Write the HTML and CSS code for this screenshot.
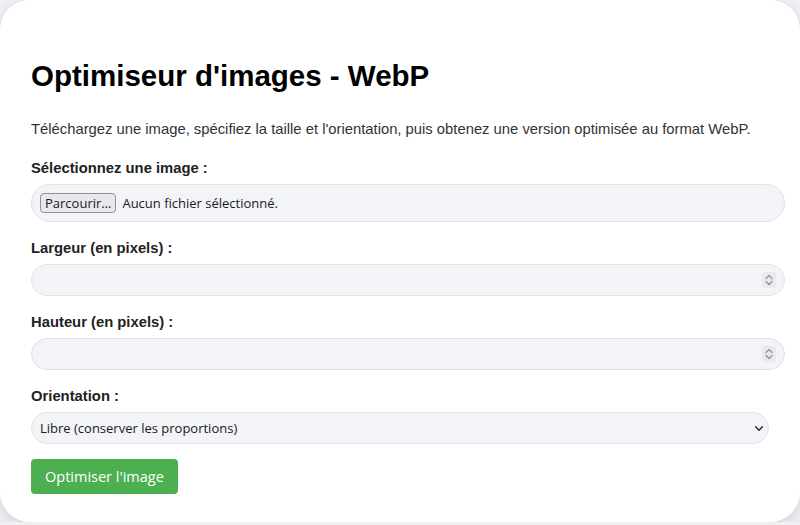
FILE: index.html
```html
<!DOCTYPE html>
<html lang="fr">
<head>
  <meta charset="UTF-8">
  <meta name="viewport" content="width=device-width, initial-scale=1.0">
  <title>Optimiseur d'images - WebP</title>
  <link rel="stylesheet" href="styles.css">
</head>
<body>
  <div class="container">
    <h1>Optimiseur d'images - WebP</h1>
    <p class="intro">Téléchargez une image, spécifiez la taille et l'orientation, puis obtenez une version optimisée au format WebP.</p>

    <form id="imageForm" class="form">
      <div class="form-group">
        <label for="imageInput">Sélectionnez une image :</label>
        <div class="file-field">
          <input type="file" id="imageInput" class="file-input" accept="image/*">
          <label for="imageInput" class="file-button">Parcourir…</label>
          <span class="file-name">Aucun fichier sélectionné.</span>
        </div>
      </div>

      <div class="form-group">
        <label for="widthInput">Largeur (en pixels) :</label>
        <div class="number-field">
          <input type="number" id="widthInput" class="input" min="1">
          <svg class="spin" viewBox="0 0 14 16" aria-hidden="true">
            <path d="M4 6.5 7 3.5 10 6.5M4 9.5 7 12.5 10 9.5" fill="none" stroke="#8a8f98" stroke-width="1.2" stroke-linecap="round" stroke-linejoin="round"/>
          </svg>
        </div>
      </div>

      <div class="form-group">
        <label for="heightInput">Hauteur (en pixels) :</label>
        <div class="number-field">
          <input type="number" id="heightInput" class="input" min="1">
          <svg class="spin" viewBox="0 0 14 16" aria-hidden="true">
            <path d="M4 6.5 7 3.5 10 6.5M4 9.5 7 12.5 10 9.5" fill="none" stroke="#8a8f98" stroke-width="1.2" stroke-linecap="round" stroke-linejoin="round"/>
          </svg>
        </div>
      </div>

      <div class="form-group form-group-last">
        <label for="orientation">Orientation :</label>
        <div class="select-field">
          <select id="orientation" class="select">
            <option value="free">Libre (conserver les proportions)</option>
            <option value="landscape">Paysage</option>
            <option value="portrait">Portrait</option>
            <option value="square">Carré</option>
          </select>
          <svg class="chevron" viewBox="0 0 12 8" aria-hidden="true">
            <path d="M2 2 6 6 10 2" fill="none" stroke="#2b2b2b" stroke-width="1.8" stroke-linecap="round" stroke-linejoin="round"/>
          </svg>
        </div>
      </div>

      <button type="submit" class="btn">Optimiser l'image</button>
    </form>
  </div>

  <script>
    const imageInput = document.getElementById('imageInput');
    const fileName = document.querySelector('.file-name');

    // Show the chosen file name next to the button
    imageInput.addEventListener('change', () => {
      fileName.textContent = imageInput.files.length
        ? imageInput.files[0].name
        : 'Aucun fichier sélectionné.';
    });

    document.getElementById('imageForm').addEventListener('submit', (e) => {
      e.preventDefault();
    });
  </script>
</body>
</html>
```

FILE: styles.css
```css
:root {
  --bg-color: #eef0f3;
  --card-bg: #ffffff;
  --field-bg: #f2f4f7;
  --field-border: #dfe2e7;
  --text-color: #333333;
  --label-color: #222222;
  --green: #4caf50;
  --ui-font: "Open Sans", "Noto Sans", sans-serif;
}

* {
  box-sizing: border-box;
}

body {
  margin: 0;
  background-color: var(--bg-color);
  font-family: "Liberation Sans", Arial, sans-serif;
  color: var(--text-color);
}

.container {
  max-width: 800px;
  margin: 0 auto;
  padding: 30px 31px 28px;
  background-color: var(--card-bg);
  border-radius: 30px;
  box-shadow: 0 4px 14px rgba(0, 0, 0, 0.12);
}

h1 {
  margin: 29px 0 28px;
  font-size: 29.5px;
  font-weight: 700;
  color: #000;
}

.intro {
  margin: 0 0 23px;
  font-size: 14.8px;
}

.form-group {
  margin-bottom: 18px;
}

.form-group-last {
  margin-bottom: 15px;
}

.form-group > label {
  display: block;
  margin-bottom: 8px;
  font-size: 14.8px;
  font-weight: 700;
  color: var(--label-color);
}

/* File picker */
.file-field {
  display: flex;
  align-items: center;
  gap: 6px;
  width: calc(100% + 16px);
  height: 38px;
  padding: 0 8px;
  background-color: var(--field-bg);
  border: 1px solid var(--field-border);
  border-radius: 19px;
  font-family: var(--ui-font);
  font-size: 13px;
  color: #1a1a1a;
}

.file-input {
  display: none;
}

.file-button {
  padding: 0 4px;
  background-color: #e9e9ed;
  border: 1px solid #8f8f9d;
  border-radius: 4px;
  cursor: pointer;
}

/* Number fields */
.number-field,
.select-field {
  position: relative;
}

.input,
.select {
  display: block;
  height: 32px;
  background-color: var(--field-bg);
  border: 1px solid var(--field-border);
  border-radius: 16px;
  font-family: var(--ui-font);
  font-size: 13px;
  color: #1a1a1a;
}

.input {
  width: calc(100% + 16px);
  padding: 0 8px;
  -moz-appearance: textfield;
}

.input::-webkit-inner-spin-button,
.input::-webkit-outer-spin-button {
  -webkit-appearance: none;
  margin: 0;
}

.spin {
  position: absolute;
  top: 8px;
  right: -7px;
  width: 14px;
  height: 16px;
  background-color: #e8eaee;
  border-radius: 3px;
  pointer-events: none;
}

/* Select */
.select {
  width: 100%;
  padding: 0 28px 0 8px;
  -webkit-appearance: none;
  appearance: none;
}

.chevron {
  position: absolute;
  top: 13px;
  right: 5px;
  width: 10px;
  height: 7px;
  pointer-events: none;
}

/* Submit */
.btn {
  display: block;
  height: 35px;
  padding: 0 14px;
  background-color: var(--green);
  color: #fff;
  border: none;
  border-radius: 4px;
  font-family: var(--ui-font);
  font-size: 14.5px;
  cursor: pointer;
}

.btn:hover {
  background-color: #43a047;
}
```
